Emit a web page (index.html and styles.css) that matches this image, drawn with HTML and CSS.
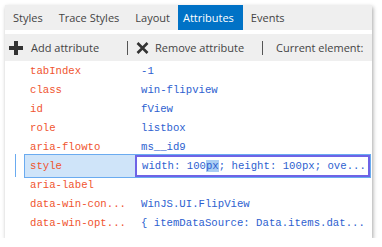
FILE: index.html
```html
<!DOCTYPE html>
<html lang="en">
<head>
    <meta charset="UTF-8">
    <title>Attributes</title>
    <link rel="stylesheet" href="styles.css">
</head>
<body>
    <div class="panel">
        <div class="tabs">
            <div class="tab">Styles</div>
            <div class="tab">Trace Styles</div>
            <div class="tab">Layout</div>
            <div class="tab active">Attributes</div>
            <div class="tab">Events</div>
        </div>

        <div class="toolbar">
            <div class="tool tool-add">
                <svg width="14" height="14" viewBox="0 0 14 14">
                    <path d="M5 0h4v5h5v4h-5v5h-4v-5h-5v-4h5z" fill="#333"/>
                </svg>
                <span>Add attribute</span>
            </div>
            <span class="sep"></span>
            <div class="tool tool-remove">
                <svg width="13" height="12" viewBox="0 0 13 12">
                    <path d="M1.5 1l10 10M11.5 1l-10 10" stroke="#333" stroke-width="2.6"/>
                </svg>
                <span>Remove attribute</span>
            </div>
            <span class="sep"></span>
            <div class="tool tool-current">Current element:</div>
        </div>

        <div class="rows">
            <div class="row"><span class="name">tabIndex</span><span class="value">-1</span></div>
            <div class="row"><span class="name">class</span><span class="value">win-flipview</span></div>
            <div class="row"><span class="name">id</span><span class="value">fView</span></div>
            <div class="row"><span class="name">role</span><span class="value">listbox</span></div>
            <div class="row"><span class="name">aria-flowto</span><span class="value">ms__id9</span></div>
            <div class="row selected">
                <span class="name">style</span>
                <span class="edit">width: 100<span class="sel">px</span>; height: 100px; ove...</span>
            </div>
            <div class="row"><span class="name">aria-label</span><span class="value"></span></div>
            <div class="row"><span class="name">data-win-con...</span><span class="value">WinJS.UI.FlipView</span></div>
            <div class="row"><span class="name">data-win-opt...</span><span class="value">{ itemDataSource: Data.items.dat...</span></div>
        </div>
    </div>
</body>
</html>
```

FILE: styles.css
```css
* {
    margin: 0;
    padding: 0;
    box-sizing: border-box;
}

body {
    background-color: #fff;
    font-family: 'Open Sans', sans-serif;
    color: #444;
}

.panel {
    margin: 5px 0 0 5px;
    width: 367px;
    height: 233px;
    background-color: #fff;
    box-shadow: 1px 2px 4px rgba(0, 0, 0, 0.35);
}

/* tab strip */
.tabs {
    display: flex;
    height: 25px;
    background-color: #efefef;
}

.tab {
    display: flex;
    align-items: center;
    padding: 0 8px;
    font-size: 11px;
    color: #444;
    white-space: nowrap;
}

.tab.active {
    padding: 0 9px 0 5px;
    background-color: #0072c6;
    color: #fff;
}

/* toolbar */
.toolbar {
    display: flex;
    align-items: center;
    height: 27px;
    margin-top: 4px;
    padding-left: 4px;
    background-color: #efefef;
    font-size: 11px;
    white-space: nowrap;
}

.tool {
    display: flex;
    align-items: center;
    gap: 8px;
}

.tool-add {
    width: 118px;
}

.tool-remove {
    width: 134px;
    padding-left: 8px;
    gap: 6px;
}

.tool-current {
    padding-left: 13px;
}

.sep {
    width: 1px;
    height: 14px;
    background-color: #555;
}

/* attribute rows */
.row {
    display: flex;
    align-items: center;
    height: 19px;
    padding-left: 25px;
    font-family: 'Liberation Mono', monospace;
    font-size: 10.67px;
    white-space: nowrap;
}

.name {
    width: 111px;
    color: #f0552f;
}

.value {
    color: #2e5fd0;
}

.row.selected {
    position: relative;
    height: 24px;
    margin: -2px 1px -3px 19px;
    padding-left: 5px;
    background-color: #cfe4f9;
    border: 1px solid #6aabf0;
}

.row.selected::before {
    content: "";
    position: absolute;
    left: -10px;
    top: -1px;
    width: 1px;
    height: 23px;
    background-color: #6aabf0;
}

.row.selected .name {
    width: 105px;
}

.edit {
    flex: 1;
    align-self: stretch;
    display: flex;
    align-items: center;
    padding-left: 5px;
    background-color: #fff;
    border: 2px solid #6e63e6;
    color: #2e5fd0;
}

.sel {
    background-color: #a9cdf3;
}
```
